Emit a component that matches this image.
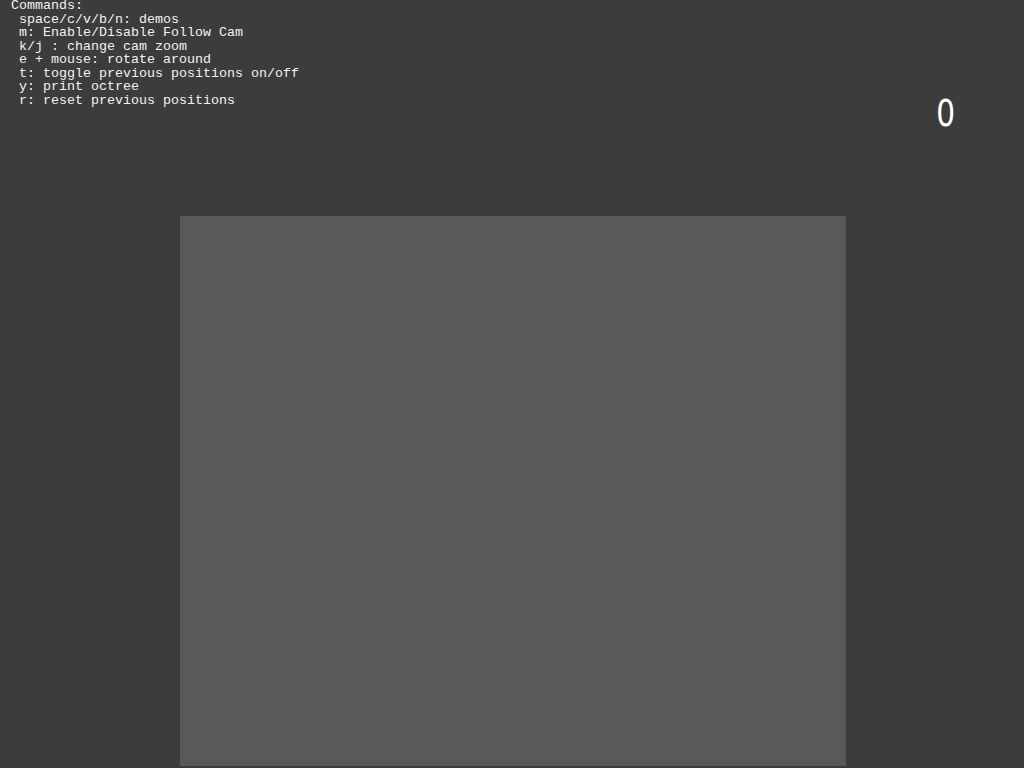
import React from 'react';

const commands: string[] = [
  ' space/c/v/b/n: demos',
  ' m: Enable/Disable Follow Cam',
  ' k/j : change cam zoom',
  ' e + mouse: rotate around',
  ' t: toggle previous positions on/off',
  ' y: print octree',
  ' r: reset previous positions',
];

const App: React.FC = () => {
  return (
    <div className="relative w-[1024px] h-[768px] overflow-hidden bg-[#3c3c3c]">
      {/* scene */}
      <div className="pl-[180px] pt-[216px]">
        <div className="w-[666px] h-[550px] bg-[#595959]" />
      </div>

      {/* HUD overlay */}
      <div
        className="absolute left-[11px] top-[-1px] text-[13.33px] leading-[13.5px] text-[#f2f2f2] whitespace-pre"
        style={{ fontFamily: '"Liberation Mono", "DejaVu Sans Mono", monospace' }}
      >
        <div>Commands:</div>
        {commands.map(c => (
          <div key={c}>{c}</div>
        ))}
      </div>

      <div
        className="absolute left-[934px] top-[94px] text-[37px] leading-[40px] text-white scale-x-[0.8] font-normal"
        style={{ fontFamily: '"DejaVu Sans", sans-serif' }}
      >
        0
      </div>
    </div>
  );
};

export default App;
